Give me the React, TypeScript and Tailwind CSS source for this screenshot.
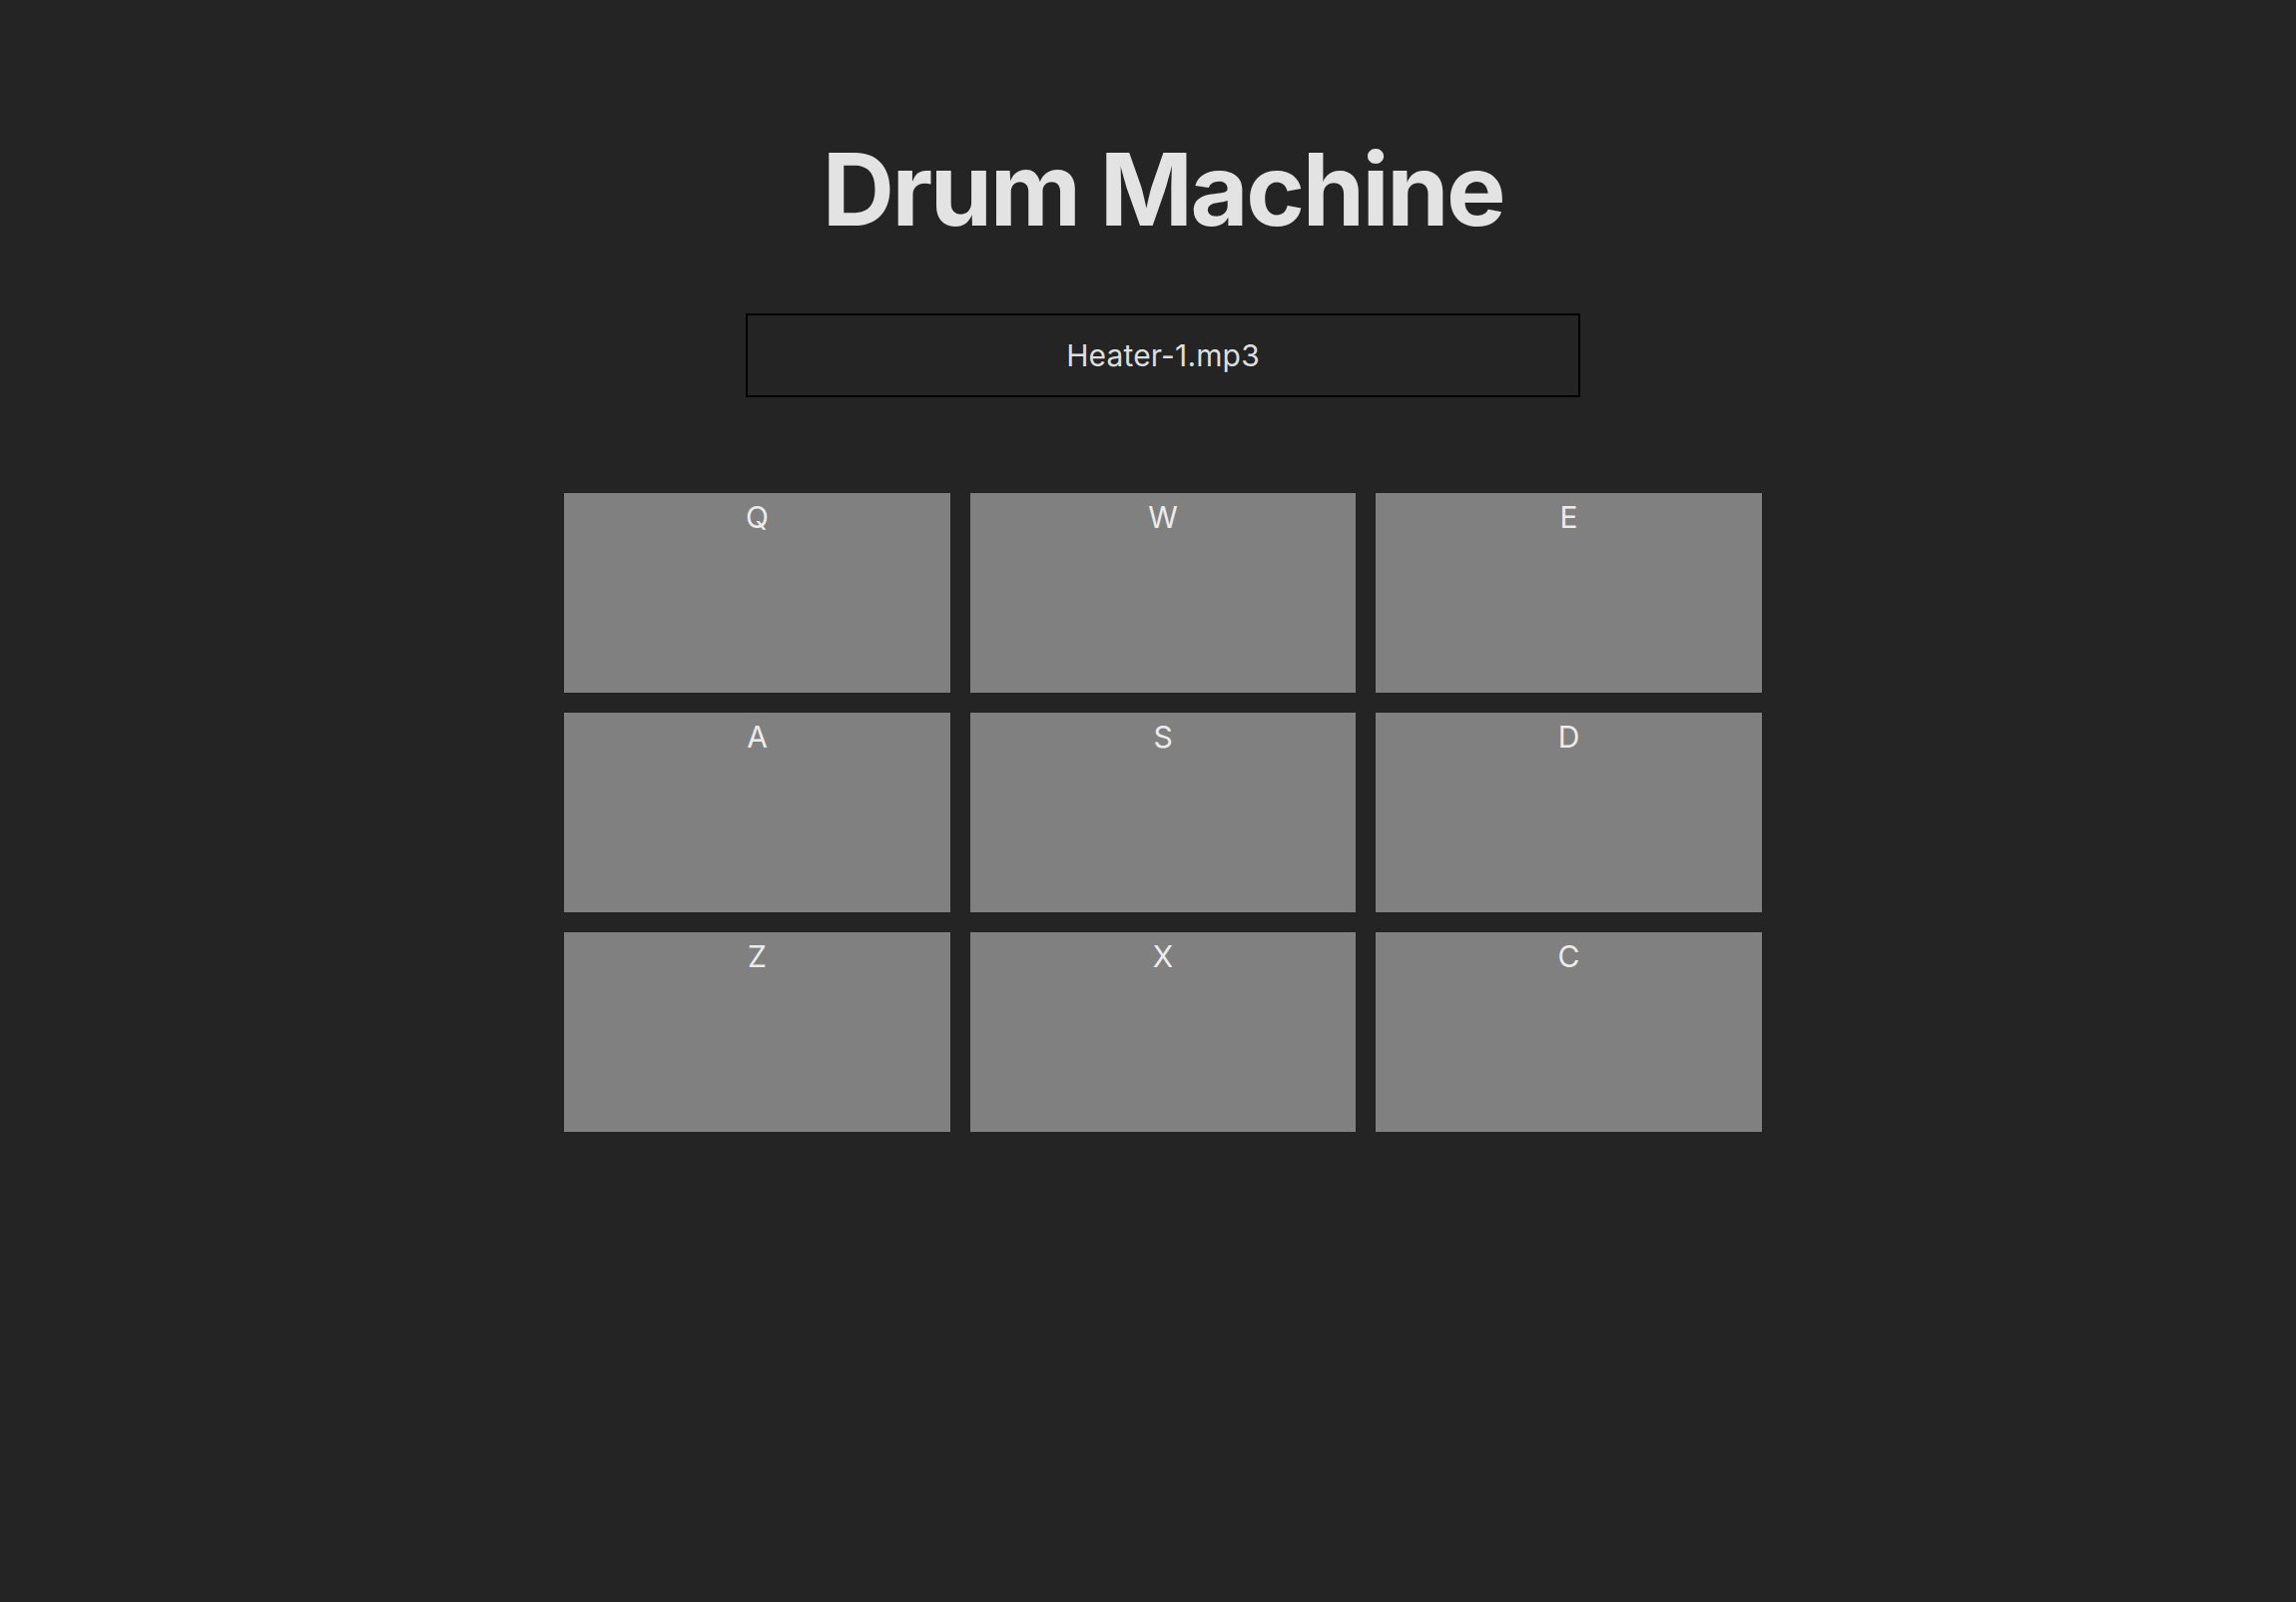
export default function App() {
  const keys = ["Q", "W", "E", "A", "S", "D", "Z", "X", "C"];
  return (
    <div className="min-h-[1605px] w-full bg-[#242424] pl-[30px] flex flex-col items-center text-[#e3e3e3]" style={{ fontFamily: "Inter, 'Noto Sans', sans-serif" }}>
      <h1 className="mt-[130px] text-[100px] leading-[120px] font-bold tracking-[-0.024em]">Drum Machine</h1>
      <div className="mt-[64px] w-[836px] h-[84px] border-2 border-black flex items-center justify-center text-[30px] leading-normal tracking-[0.005em] text-[#dedede]">
        Heater-1.mp3
      </div>
      <div className="mt-[96px] grid grid-cols-[repeat(3,386.5px)] gap-[20px]">
        {keys.map((k) => (
          <div key={k} className="h-[200px] bg-[#808080] pt-[1.5px] text-center text-[30px] leading-normal text-[#ececec]">
            {k}
          </div>
        ))}
      </div>
    </div>
  );
}
